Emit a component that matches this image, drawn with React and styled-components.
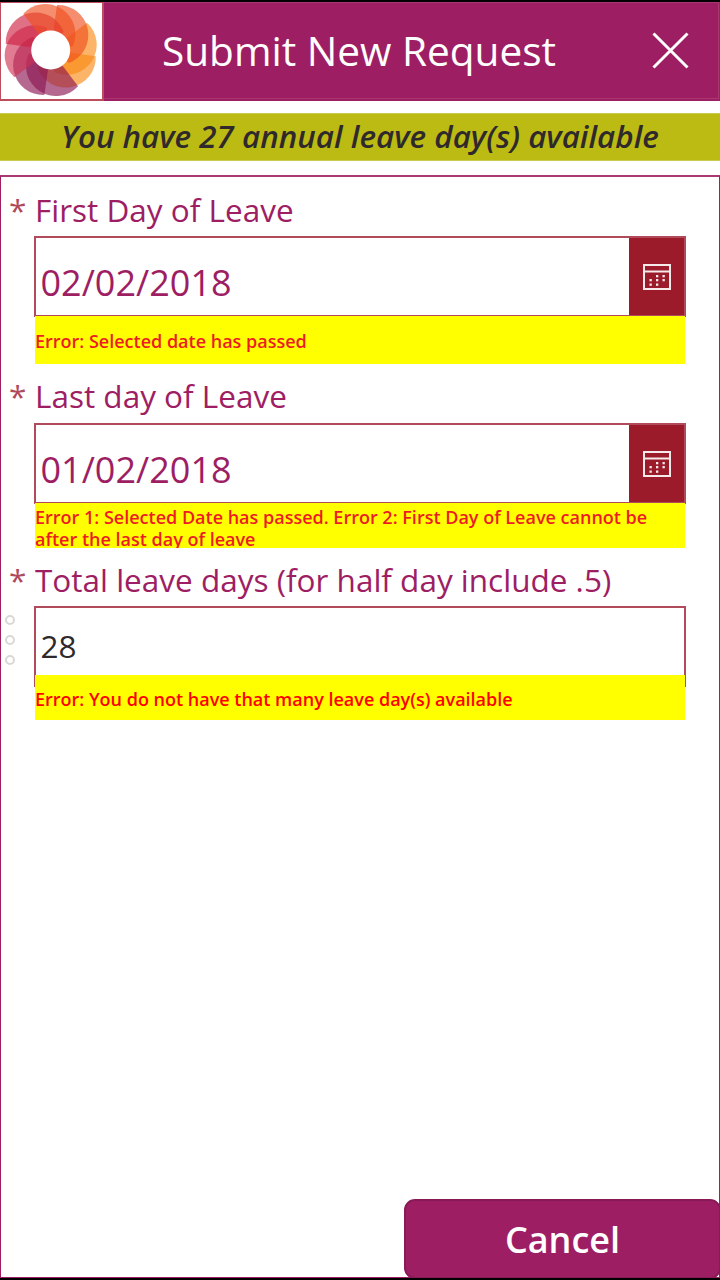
import React from 'react';
import styled, { createGlobalStyle } from 'styled-components';

const plum = '#9e1e64';
const rose = '#b14a5b';

const GlobalStyle = createGlobalStyle`
  * { box-sizing: border-box; }
  body { margin: 0; background: #fff; font-family: 'Open Sans', sans-serif; }
`;

const Screen = styled.div`
  display: flex;
  flex-direction: column;
  width: 720px;
  height: 1280px;
  border-top: 2px solid #000;
  border-bottom: 2px solid #000;
  background: #fff;
  overflow: hidden;
`;

const Header = styled.header`
  display: flex;
  flex: none;
  height: 99px;
  background: ${plum};
`;

const LogoCell = styled.div`
  flex: none;
  width: 104px;
  height: 99px;
  border: solid #bd4c5c;
  border-width: 1px 2px 2px 1px;
  background: #fff;
  svg { display: block; }
`;

const TitleBar = styled.div`
  display: flex;
  flex: 1;
  align-items: center;
  margin: 0 1px 2px 0;
  border: solid #aa3870;
  border-width: 1px 1px 1px 0;
`;

const Title = styled.h1`
  margin: 1px 0 0 58px;
  width: 490px;
  color: #fff;
  font-size: 40.55px;
  line-height: 56px;
  font-weight: 400;
  white-space: nowrap;
`;

const CloseButton = styled.button`
  display: flex;
  padding: 0;
  border: 0;
  background: none;
`;

const Balance = styled.p`
  flex: none;
  margin: 12px 0 14px;
  height: 48px;
  border: solid #cccb4f;
  border-width: 1px 0;
  background: #bcbb14;
  color: #2f292b;
  font-size: 31.4px;
  line-height: 44px;
  font-style: italic;
  font-weight: 600;
  text-align: center;
  white-space: nowrap;
`;

const Form = styled.form`
  display: flex;
  flex: 1;
  flex-direction: column;
  border: 1px solid ${plum};
  border-top: 2px solid #a93a76;
`;

const Field = styled.section`
  display: flex;
  flex: none;
  flex-direction: column;
  height: ${(p) => p.$height}px;
`;

const Label = styled.label`
  display: flex;
  flex: none;
  height: ${(p) => p.$height}px;
  align-items: flex-end;
  padding: 0 0 ${(p) => p.$bottom || 4}px 8px;
  color: ${plum};
  font-size: 31.5px;
  line-height: 44px;
  white-space: nowrap;
`;

const Required = styled.span`
  width: 26px;
  color: ${rose};
`;

const InputBox = styled.div`
  display: flex;
  flex: none;
  justify-content: space-between;
  width: 652px;
  height: 81px;
  margin-left: 33px;
  border: 2px solid ${rose};
  background: #fff;
`;

const Value = styled.span`
  padding: ${(p) => p.$top}px 0 0 4.5px;
  color: ${(p) => p.$color};
  font-size: ${(p) => p.$size}px;
  line-height: 50px;
`;

const CalendarButton = styled.button`
  display: flex;
  width: 55px;
  align-items: center;
  justify-content: center;
  padding: 0;
  border: 0;
  background: #9b1b2b;
`;

const ErrorText = styled.div`
  position: relative;
  flex: none;
  width: 650px;
  height: ${(p) => p.$height}px;
  margin: -${(p) => p.$overlap}px 0 0 34px;
  padding-top: ${(p) => p.$top}px;
  overflow: hidden;
  background: #ff0;
  color: ${(p) => p.$color || '#ed1c24'};
  font-size: 18px;
  line-height: 22px;
  font-weight: 600;
`;

const InputRow = styled.div`
  display: flex;
  height: 81px;
`;

const Dots = styled.div`
  display: flex;
  flex-direction: column;
  gap: 10px;
  width: 33px;
  padding: 9px 0 0 4px;
  & + div { margin-left: 0; }
`;

const Dot = styled.span`
  width: 10px;
  height: 10px;
  border: 2px solid #d8d8d8;
  border-radius: 50%;
`;

const CancelButton = styled.button`
  align-self: flex-end;
  flex: none;
  width: 317px;
  height: 80px;
  margin: auto -2px -2px 0;
  padding: 1px 0 0;
  border: 2px solid #8a1a57;
  border-radius: 11px;
  background: ${plum};
  color: #fff;
  font: 600 36px/75px 'Open Sans', sans-serif;
  text-align: center;
`;

// Petals in stacking order: rotation step, colour
const petals = [
  [2, '#f88a12'],
  [1, '#f88a12'],
  [0, '#f04e1e'],
  [3, '#8c1552'],
  [4, '#8c1552'],
  [5, '#cf3054'],
  [6, '#cf2040'],
  [7, '#f04e1e'],
];

function Logo() {
  return (
    <svg width="101" height="96" viewBox="1 3 101 96">
      {petals.map(([step, fill]) => (
        <path key={step} fill={fill} fillOpacity="0.64" transform={`rotate(${step * 45} 50.7 50)`} d="M57 5A30 30 0 0 1 69 63L50.7 50Z" />
      ))}
      <circle cx="50.7" cy="50" r="19.5" fill="#fff" />
    </svg>
  );
}

function CalendarIcon() {
  return (
    <svg width="28" height="28" viewBox="0 0 28 28" fill="none" stroke="#f5e9ea" strokeWidth="2">
      <path d="M1 2H27V26H1ZM1 8.5H27" />
      <g fill="#f5e9ea" stroke="none">
        {[[13, 12], [19.5, 12], [6.5, 16], [13, 16], [19.5, 16], [6.5, 20.5], [13, 20.5]].map(([x, y]) => (
          <rect key={`${x}-${y}`} x={x} y={y} width="2.3" height="2.3" />
        ))}
      </g>
    </svg>
  );
}

function DateInput({ value }) {
  return (
    <InputBox>
      <Value $color={plum} $size={36} $top={20}>{value}</Value>
      <CalendarButton type="button" aria-label="Choose date"><CalendarIcon /></CalendarButton>
    </InputBox>
  );
}

export default function App() {
  return (
    <>
      <GlobalStyle />
      <Screen>
        <Header>
          <LogoCell><Logo /></LogoCell>
          <TitleBar>
            <Title>Submit New Request</Title>
            <CloseButton aria-label="Close">
              <svg width="37" height="37" viewBox="0 0 37 37" stroke="#fff" strokeWidth="3">
                <path d="M1.5 1.5L35.5 35.5M35.5 1.5L1.5 35.5" />
              </svg>
            </CloseButton>
          </TitleBar>
        </Header>
        <Balance>You have 27 annual leave day(s) available</Balance>
        <Form>
          <Field $height={187}>
            <Label $height={59}><Required>*</Required>First Day of Leave</Label>
            <DateInput value="02/02/2018" />
            <ErrorText $height={48} $top={14} $overlap={1}>Error: Selected date has passed</ErrorText>
          </Field>
          <Field $height={184}>
            <Label $height={59} $bottom={5}><Required>*</Required>Last day of Leave</Label>
            <DateInput value="01/02/2018" />
            <ErrorText $height={45} $top={3} $overlap={1}>
              Error 1: Selected Date has passed. Error 2: First Day of Leave cannot be after the last day of leave
            </ErrorText>
          </Field>
          <Field $height={172}>
            <Label $height={58}><Required>*</Required>Total leave days (for half day include .5)</Label>
            <InputRow>
              <Dots><Dot /><Dot /><Dot /></Dots>
              <InputBox><Value $color="#2f292b" $size={31.5} $top={13}>28</Value></InputBox>
            </InputRow>
            <ErrorText $height={45} $top={13} $overlap={12} $color="#ff0000">
              Error: You do not have that many leave day(s) available
            </ErrorText>
          </Field>
          <CancelButton type="button">Cancel</CancelButton>
        </Form>
      </Screen>
    </>
  );
}
